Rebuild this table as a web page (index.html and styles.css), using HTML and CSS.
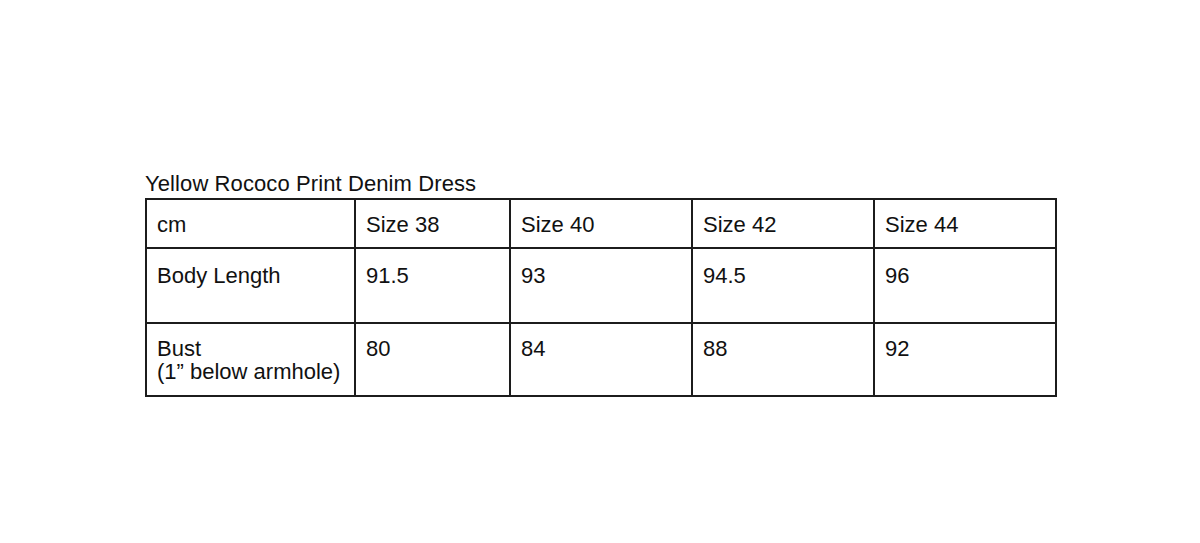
FILE: index.html
```html
<!DOCTYPE html>
<html>
<head>
<meta charset="utf-8">
<link rel="stylesheet" href="styles.css">
</head>
<body>
<div class="page">
  <div class="title">Yellow Rococo Print Denim Dress</div>
  <table class="sizes">
    <colgroup>
      <col class="c-label">
      <col class="c-s38">
      <col class="c-wide">
      <col class="c-wide">
      <col class="c-wide">
    </colgroup>
    <tr class="r-head">
      <td>cm</td>
      <td>Size 38</td>
      <td>Size 40</td>
      <td>Size 42</td>
      <td>Size 44</td>
    </tr>
    <tr class="r-length">
      <td>Body Length</td>
      <td>91.5</td>
      <td>93</td>
      <td>94.5</td>
      <td>96</td>
    </tr>
    <tr class="r-bust">
      <td>Bust<br>(1” below armhole)</td>
      <td>80</td>
      <td>84</td>
      <td>88</td>
      <td>92</td>
    </tr>
  </table>
</div>
</body>
</html>
```
FILE: styles.css
```css
html, body {
  margin: 0;
  padding: 0;
  background: #ffffff;
}

body {
  font-family: "Liberation Sans", Arial, sans-serif;
  color: #111111;
  font-size: 22px;
  line-height: 23px;
}

.page {
  padding: 172px 0 0 145px;
}

.title {
  height: 26px;
  letter-spacing: 0.1px;
}

.sizes {
  border-collapse: collapse;
  table-layout: fixed;
  width: 912px;
}

.c-label { width: 209px; }
.c-s38 { width: 155px; }
.c-wide { width: 182px; }

.sizes td {
  border: 2px solid #1c1c1c;
  padding: 13px 10px 0 10px;
  vertical-align: top;
  white-space: nowrap;
}

.r-head td { height: 49px; box-sizing: border-box; }
.r-length td { height: 75px; box-sizing: border-box; padding-top: 15px; }
.r-bust td { height: 73px; box-sizing: border-box; }
```
